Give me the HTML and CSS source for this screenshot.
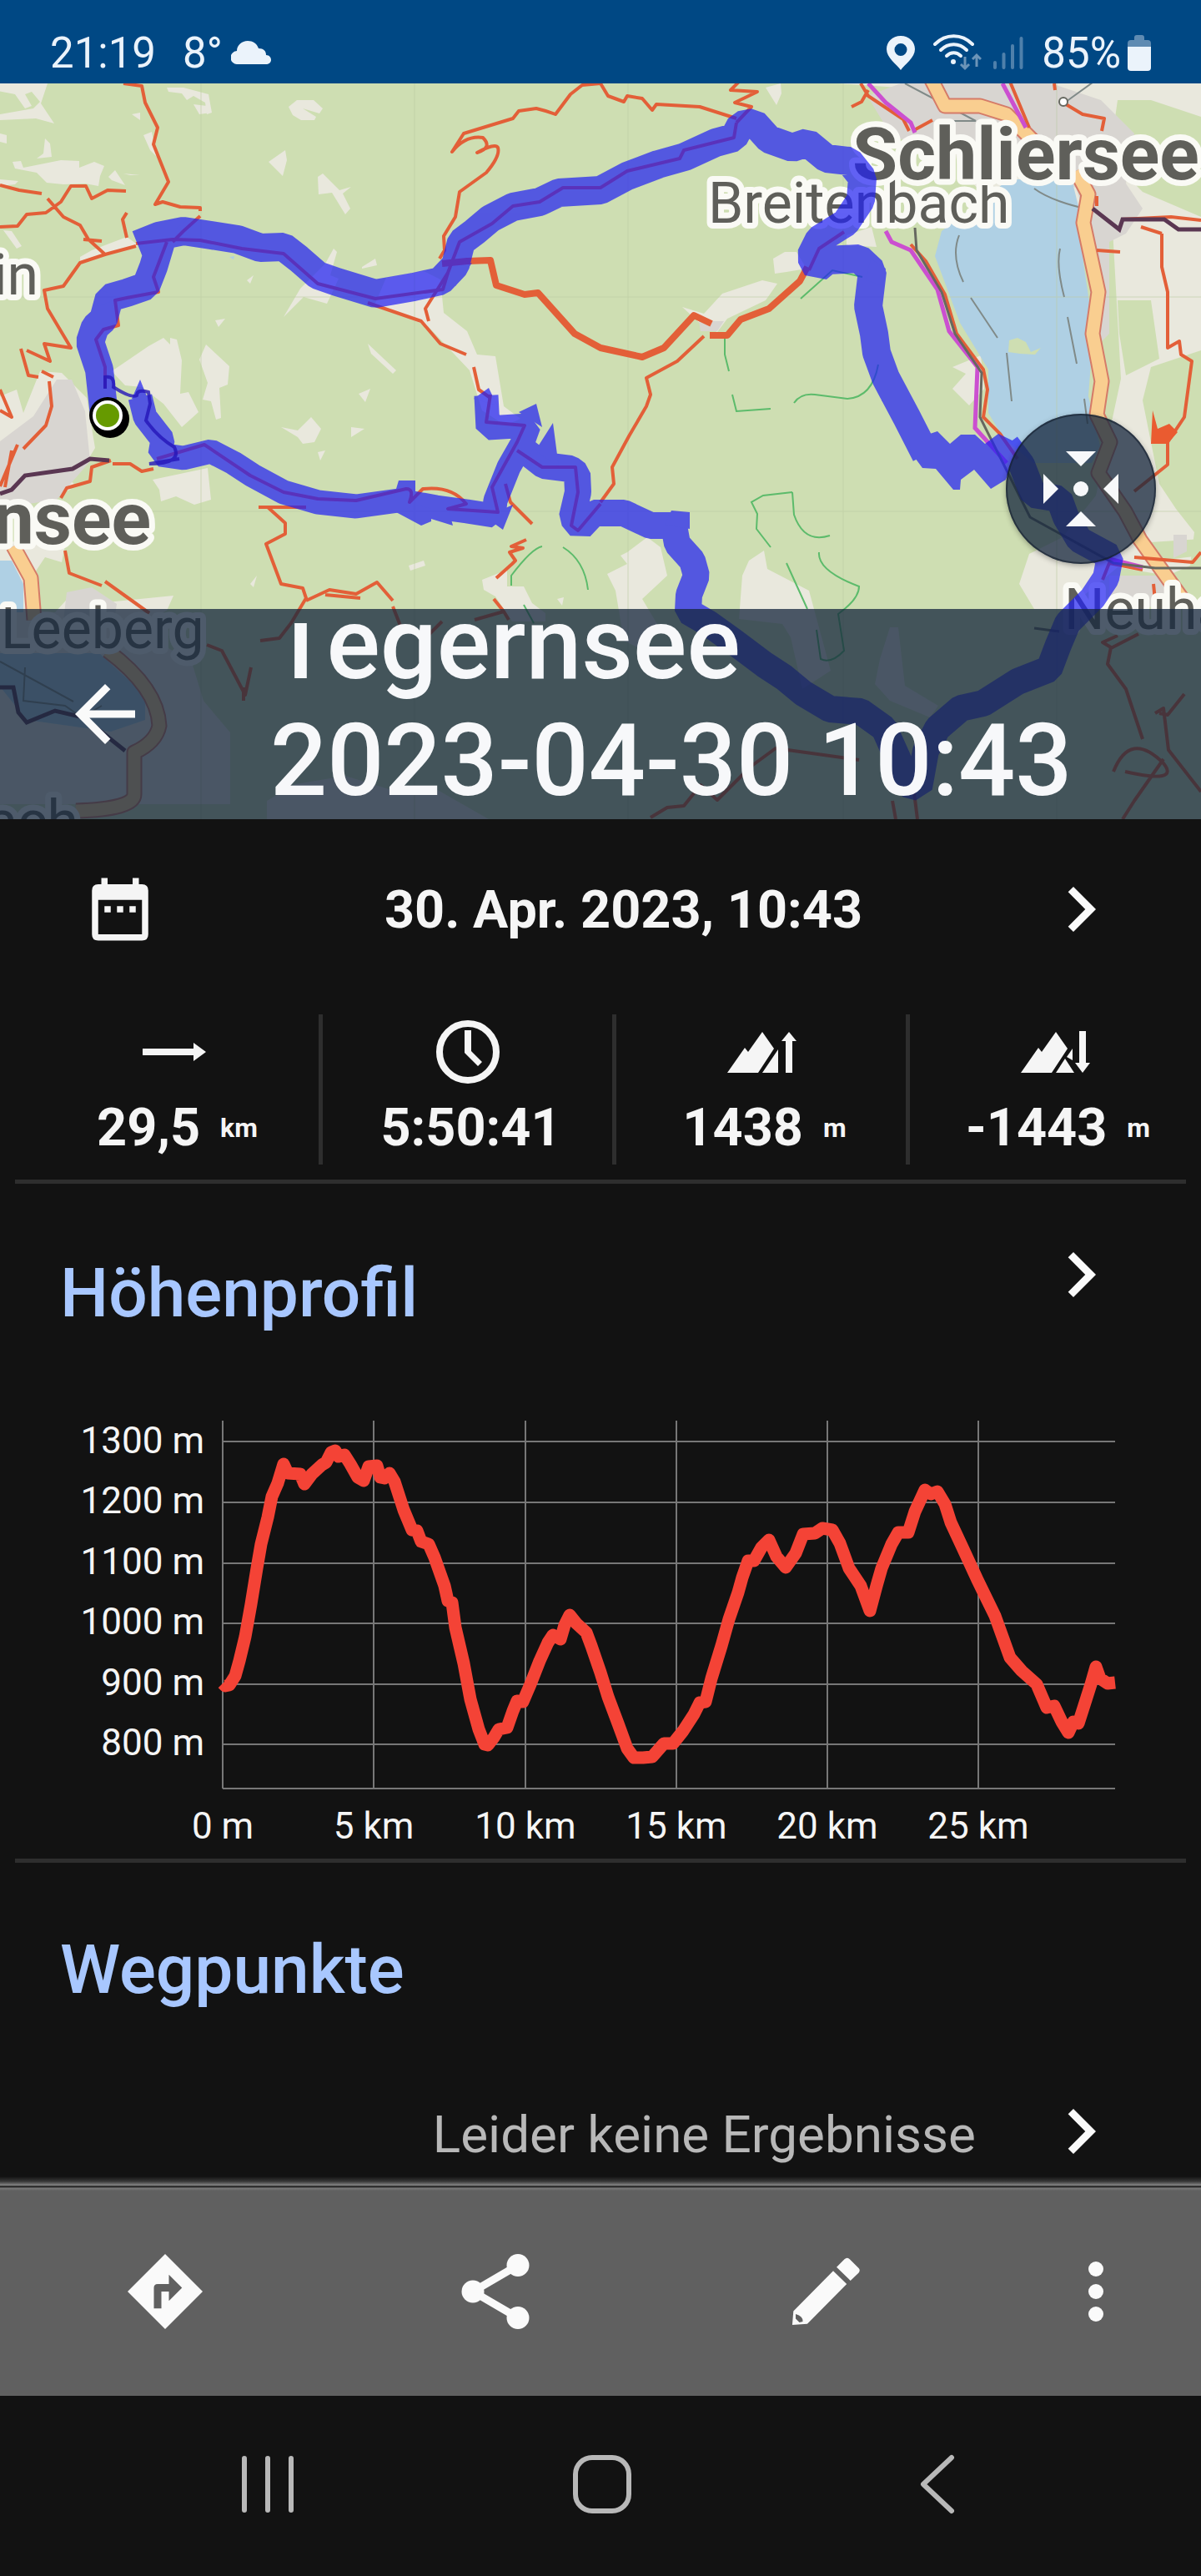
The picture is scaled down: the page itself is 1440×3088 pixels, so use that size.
FILE: index.html
```html
<!DOCTYPE html>
<html lang="de">
<head>
    <meta charset="UTF-8">
    <meta name="viewport" content="width=device-width, initial-scale=1.0">
    <title>Tegernsee 2023-04-30 10:43</title>
    <link rel="stylesheet" href="styles.css">
</head>
<body>

    <div class="status-bar">
        <span class="status-time">21:19</span>
        <span class="status-temp">8°</span>
        <svg class="icon-cloud" width="48" height="28" viewBox="0 0 48 28"><path d="M8 28a8 8 0 0 1-1-16C7 5 13 0 20 0c6 0 11 3 13 9 6 0 9 3 9 8 4 0 6 3 6 6s-3 5-6 5z" fill="#ebf3fb"/></svg>
        <div class="status-right">
            <svg width="34" height="41" viewBox="0 0 34 41"><path fill-rule="evenodd" d="M17 0C7 0 0 7 0 16c0 10 12 18 17 25 5-7 17-15 17-25C34 7 27 0 17 0zm0 9a7 7 0 1 1 0 15 7 7 0 0 1 0-15z" fill="#ebf3fb"/></svg>
            <svg class="icon-wifi" width="58" height="46" viewBox="0 0 58 46">
                <g fill="none" stroke="#ebf3fb" stroke-width="4" stroke-linecap="round"><path d="M2 13C15 0 34 0 47 13"/><path d="M9 20c9-9 22-9 31 0"/><path d="M16 27c5-5 12-5 17 0"/></g>
                <circle cx="24" cy="34" r="3" fill="#ebf3fb"/>
                <path d="M38 28v14m-5-5l5 5 5-5M52 40V26m-5 5l5-5 5 5" fill="none" stroke="#6c94b8" stroke-width="3"/>
            </svg>
            <svg class="icon-signal" width="36" height="40" viewBox="0 0 36 40"><path d="M2 38v-6M12.500 38V22M23 38V12M33.500 38V3" fill="none" stroke="#4f80ab" stroke-width="4" stroke-linecap="round"/></svg>
            <span class="status-battery">85%</span>
            <svg width="28" height="43" viewBox="0 0 28 43"><path d="M8 3q0-3 3-3h6q3 0 3 3v3h4q4 0 4 4v4H0v-4q0-4 4-4h4z" fill="#5f8bb2"/><path d="M0 14h28v25q0 4-4 4H4q-4 0-4-4z" fill="#ebf3fb"/></svg>
        </div>
    </div>

    <header class="map-header">
        <svg class="map" viewBox="0 100 1440 882">
            <rect y="100" width="1440" height="882" fill="#cedeb2"/>

            <!-- meadows -->
            <g fill="#e9e8dd">
                <path d="M0 100h57l-8 24 16 24-22-6-43 2v-7l40-7 8-8-10-12-8 3 8 14-8 3-12-17-20-4z"/>
                <path d="M200 105l20 0 30 8 4 22-6 2-2-14-14-8-8 5-6-8-16-2zM232 125l16 2 5 8-14 2zM158 137l10-2 0 9zM172 162l10-4 6 30-8-8zM54 166l6 6 2 16-18 2 8-6zM0 160l8 2v10l-8-2z"/>
                <path d="M15 194l10-1 3 8 20-4 25-5 22 1 0 8 18-7 12 5-5 12-2 12-16-3-26 1-20-2-12-12-26-5zM130 212l8-8 12 18-16-6zM148 208l20 2-12 0zM0 215l22 2-4 4-18 2z"/>
                <path d="M346 128l10-8 20 0 11 10-4 6-20-6 16 10-2 4-16 0-10-6zM322 194l20-14 2 12-5 19zM381 212l6-4 20 20 14-4-10 8 9 18-6 7-16-26-16 2z"/>
                <path d="M96 308l14-8 42-16 14 10-54 14-16 5zM4 276l10 1 12 18-6 3zM400 298l4 4-8 28 10 4-14 30-28-8-24 24 20-34 30-30zM434 320l16-10 2 8-18 4zM463 333l45-8 20 10 4 40 28 22 12 28 22 2 10 60 20 15-18 8-28-18-15-48-50-53-24-10-40-15z"/>
                <path d="M134 445l44-30 18-10 8 8 0-8 8 2 6 25-2 40 10-2 12 24-20 18-22-28-26-20-20-2zM247 413l28 26-2 22-10 4 2 36-6 2-6-22-10-2 6-20-10-28zM0 475l20-8 8 28 20-50 26 2 30 30 10 60-30 50-60 20-24-40z"/>
                <path d="M337 512l20 4 16-16 12 14-8 16-14 2-6-8zM421 512l16 2-16 10zM381 542l9-2-6 12zM183 575l66-14 4 38-20 6-22-10-18 6-2-14zM430 472l14-6-6 16zM441 412l34 32-4 4-26-24zM258 384l12-2-8 10zM296 336l8-6-4 10z"/>
                <path d="M0 648l78 6-4 20-20-6-20 30 4 34 28 2 22-24 40 12 80-8-8 18-30 14 14 20 46 28 14 46 32 38v86H0zM578 695l30-12 0 20 20 0 10 20 16 12 0 10-40 0-20-30-14-8zM668 718l8-2-2 10zM490 678l18-6 2 6-18 6zM300 700l8-10-4 14z"/>
                <path d="M752 662l8-6 16-12 16 12 8 34-30 28 18 30-20 30-20-10-10-60-10-20 24-12-8-10zM886 742l4-52 8-18 18-12 4 22 50 26 26 96-34 22-14-62-10-16zM1055 790l12-38 10 0 8 70 40 24-10 14-48-20-18-20z"/>
                <path d="M918 105l18-5 1 12-6 14zM1005 100h435v320l-60 20-10 40 20 100 20 30 22 28-5 40-27 12-60-10-60 50h-40l-18-30 12-36 40-20 40-50 30-140-10-180-120-10-65-60-10-60 10-34z"/>
                <path d="M927 310l14-8 14 0 12 20-24 4-14 2zM818 368l26 8 22-24 48-16 18 4-14 20-46 22-12 16-20-10zM1015 282l30-10 6 24-36-2zM1142 440l34-14 4 40-18 20-20-20 16-18z"/>
                <path d="M320 960l34-20 60-10 72 22 30-10 70 40H320z"/>
            </g>
            <g fill="#cedeb2">
                <path d="M1100 100h70l-20 8zM1340 120l40 0 60 20v120l-70-30-40-40zM1340 360l40 0 10 70-40 20-8-50zM60 540l80 20-30 30-40-20zM50 490l30-10 20 20-40 20zM1380 650l60-4v20l-50 6z"/>
            </g>
            <!-- built-up areas -->
            <g fill="#d8d5d1">
                <path d="M1040 115l40-15h180l60 20 40 40-10 60 20 30-20 30-20 10 0 110-15 15-5-130-20-60-160-50-60-10zM68 455l18 0 16 38 6 60-40 46-68 10v-80l40-30zM80 710l30-6 30 20-4 26-60-6zM838 385l30 0-8 12-20 0zM1330 690l70 0 10 30-80 20zM1407 641l16 0 0 20-16 8z"/>
            </g>
            <!-- lakes -->
            <g fill="#afd0e4">
                <path d="M1210 215h75l10 40 4 60 12 80-6 80 14 60-10 20-70 0-36-30-18-30 0-52-34-56-30-80 8-30z"/>
                <path d="M0 672h14l14 28v34H0zM0 783l119 0 55 50v30l-41 14-101-14-32-40zM275 308l6-1-1 4z"/>
            </g>
            <path d="M1210 408l10-3 10 5 6 12 12-5-7 8-18-1-14-2z" fill="#cedeb2"/>

            <g stroke="#bccca2" stroke-width="1" opacity=".6"><path d="M241 100v882M497 100v882M753 100v882M1011 100v882M1267 100v882M0 356h1440M0 613h1440"/></g>
            <g fill="none" stroke="#808a88" stroke-width="2"><path d="M1150 282q-10 25 5 56M1164 357l32 48M1207 423l6 58M1271 298q-5 20 5 58M1280 380l11 56M1300 478l4 30M0 793l88 48M30 800l-2 40 50 6 20 14 24-14M1085 100l85 45-30 0M1240 226q20 15 65 25M1278 122l36-26"/></g>
            <g fill="none" stroke="#5cbb6b" stroke-width="2">
                <path d="M869 405v20l5 20M878 473l5 20 41-3M952 483q8-12 25-10l39 5q30-2 37-41M960 358l38-34 36 8M950 590l-35 4-14 8 7 14-1 18 17 22M950 590l2 27q12 35 43 25M982 662q-2 22 48 41q0 15-25 33l7 44q-15 16-28 10l-5-35M943 675l25 55M650 655q-12 2-37 35v12M675 656q26 16 30 51M628 725l12 22"/>
            </g>

            <!-- main roads -->
            <g fill="none" stroke-linejoin="round">
                <path d="M1115 92l18 35h42l32 10 40 40M1290 205l15 28-6 34 18 83-7 50 11 57-6 40 16 33-14 37 32 46 18 34 50 70" stroke="#d57b68" stroke-width="19"/>
                <path d="M1115 92l18 35h42l32 10 40 40M1290 205l15 28-6 34 18 83-7 50 11 57-6 40 16 33-14 37 32 46 18 34 50 70" stroke="#f9ce90" stroke-width="15"/>
                <path d="M16 655l21 38 4 50M129 780q60 45 62 90-4 20-30 32v50q0 18-70 20" stroke="#d57b68" stroke-width="19"/>
                <path d="M16 655l21 38 4 50M129 780q60 45 62 90-4 20-30 32v50q0 18-70 20" stroke="#f9ce90" stroke-width="15"/>
            </g>

            <!-- tracks and paths -->
            <g fill="none" stroke="#e35f38" stroke-width="4" stroke-linejoin="round">
                <path d="M148 100l22 3 4 20 15 30-5 20 18 45-16 27 9-3 21 6 24 1v4M240 259l-20 18-13 13M720 100l-22 2-14 11-18 24q-10-4-23-7l-21 3-7 9-59 18-14 22q16-20 37-17 12 12-7 18 22-12 25-6 3 10-14 30l-32 23-5 30-14 23 1 17-6 10"/>
                <path d="M0 222l23 6 27 4M0 272l21-1 11-14 23-2 18-13 12-19 18 0 7 15 19-10 22 1M57 238l19 22 20 10 10 17 20 18 37-10M126 305l-30 10-20 28-23 5 4 22 28 47-32-5 7 21-28-13M152 255l-5 8 5 22M25 418l9 32 12 2M50 445l14 7M59 457l3 30-7 23-27 28M0 467l14 33-14-8M100 287l22 2"/>
                <path d="M441 363l64 22 23 27 31 13M537 327l-27 43 4 15M568 440l6 27 14 10M844 403l-32 30-37 20 5 20-5 14-21 36-20 37 2 20-16 22"/>
                <path d="M720 100l9 15 19 7 4-7 18 3 12 14 5-7 52 3 44 14M888 96l-12 12 32 2-27 13 20 5-18 19M1032 100l9 15 42 28 7 14M1041 108l-8 14-12 6M1211 98l23 55M1264 100l1 8M1278 125l20 12 26 5-3 15M1096 156l22-12"/>
                <path d="M1092 293l18 20 23 40 14 47 32 43 5 24-5 33 20 20 21 30M1315 235v12M1315 300l28 2M1393 280v40l7 30v67l14-8 2 16 13 8-9 67-20 30 0 27-40 32M1393 280l-25-8M1344 263l60-3 36 4M1360 668l70 6 10-12M1383 700l2 20M1370 683l-40-8-8 20"/>
                <path d="M184 562l-14 3-14-9h-21M133 552l-23 8-2 17-28 8-7 12M21 533L0 583M14 540l-8 44M78 660l5 27 39 15M126 697l53 38M310 608h57M321 608l21 19v13l-23 12 18 48 26 5 4 12-18 30-14 18-23 3M367 720l28-13 32 5 25-14 19 22M390 713l42 4M471 727l9 23M606 580l6 22 26 26M631 647l-18 8 14 2-16 5 7 10-4 4-19 17M592 718l12 15-35 10M604 733l6 10M248 773l18 7 28 53 7-33M530 745l-20 20M292 840v-16"/>
                <path d="M1340 762l-18 8 10 6-4 20 22 30 20 60M1330 778l35-18M1420 832l-20 25-10-2M1385 855l10-6 6 50 39 50M1335 925q20-50 60-10 20 25-46 10M1395 910l-35 50-14 22M780 980l20-12 20-2 20-25 20 18 40-40 30-22 100 14M1070 960l4 22M1096 950l4 32"/>
                <path d="M163 292l44-5 33 1 50 10 50 6 41 36 69 18 81-11 6-20 14-37 39-22 25-21 32-5 28-17h45l32-20 63-15 5-10 60-15 3-18M200 290l-16 42 6 18-38 7-14 3 4 30-18 5-9 12 11 33v25M188 550l57-17 55 37 40 20 41 8 46 2 60-14q10 0 4 16l16-16q35-4 52 18l-22 6 60 4-7-30 30-54 9-20-46-4 5-33M620 540l30 20 40 0 3 30-8 40 8 6 27-32M1012 278l-30 20-12 26"/>
            </g>
            <g fill="none" stroke="#e35f38" stroke-width="8" stroke-linejoin="round"><path d="M530 316l30-3 28-1 7 30 34 11 16-2 44 49 31 17 50 11 26-11 36-39 21 10M851 402h21l16-19 34-13 37-33 9-17"/></g>
            <path d="M1382 492l6 22 14-6 10 10-12 14-20 0z" fill="#ea5b30"/>
            <g fill="none" stroke="#cb4fd0" stroke-width="5"><path d="M1041 100l21 23 30 24 5 12M1202 100l28 53M1062 277l7 13 23 10 32 47 14 50 34 43-3 73 38 42M1330 670l40 10"/></g>
            <g fill="none" stroke="#666860" stroke-width="3"><path d="M1097 273l2 27 30 50 16 50 32 47-2 53 60 120 100 55 50 6 55 0M1240 753l30 4"/></g>
            <g fill="none" stroke="#5a3752" stroke-width="5"><path d="M0 592l14-5 16-17 57-8 21-12 23 2M1310 250l32 25 4-12 50 0 17 12h27M0 824h16l6 30 10 12 34-14 34 8 50 40"/></g>
            <circle cx="1275" cy="122" r="5" fill="#fff" stroke="#666860" stroke-width="2"/>

            <!-- place names -->
            <g class="place">
                <text x="849" y="267">Breitenbach</text>
                <text x="46" y="353" text-anchor="end">in</text>
                <text x="1" y="777">Leeberg</text>
                <text x="1276" y="754">Neuhaus</text>
                <text x="94" y="1008" text-anchor="end">ach</text>
            </g>
            <g class="place place-town">
                <text x="1022" y="215">Schliersee</text>
                <text x="181" y="652" text-anchor="end">nsee</text>
            </g>

            <!-- recorded track -->
            <g opacity=".7" fill="#201ff4" stroke="#201ff4" stroke-linejoin="bevel">
                <path fill="none" stroke-width="34" d="M125 498L119 443 108 410 114 392 124 383 131 357 152 351 175 343 184 320 193 290M165 293L190 283 220 277 253 282 285 287 312 297 340 296 358 310 381 330 404 338 450 352 496 344 528 337 546 318 553 290 569 278 588 262 615 248 647 242 670 231 720 228 752 211 789 197 821 188 858 171 880 165 888 150 904 147 922 167 950 177 968 171 991 190 1018 193 1034 213 1032 240 1014 267 982 287 972 307 980 322 992 312 1030 310 1046 325 1041 367 1048 400 1051 423 1062 453 1087 500 1110 545"/>
                <path stroke="none" d="M1057 480H1087L1115 520 1124 517 1139 532 1152 521 1169 521 1181 532 1197 520 1222 532 1206 575 1188 586 1168 563 1152 575 1151 587 1143 587 1122 562 1106 561 1092 542 1089 515z"/>
                <path fill="none" stroke-width="32" d="M1207 533L1225 557 1239 593 1270 598 1278 620 1294 647 1331 667 1326 693 1310 717 1280 747 1269 773 1258 802 1220 817 1179 843 1152 849 1124 873 1110 900 1102 944 1087 940 1078 913 1060 873 1032 853 995 850 963 831 940 812 917 797 881 770 849 747 825 733 826 713 835 690 830 672 812 652 808 630 780 630 748 615 712 615 696 632 686 620 693 590 692 568 684 562 652 558 629 540"/>
                <path fill="none" stroke-width="29" d="M583 474L585 513 634 510 626 532 610 560 594 600 592 618 560 613 523 608 478 600 427 607 381 602 340 590 303 570 280 555 253 541 220 549 192 545 195 527 174 500 168 476"/>
                <path stroke="none" d="M158 478L168 455 178 480zM568 478L586 465 596 486zM622 494L643 484 650 512zM642 540L663 507 670 560zM478 576h20v20h-26zM210 275l14-11 20 10zM116 368l4-21 24 10zM500 605l17 5v15l-12 5-30-16zM582 620l21 15 12-30zM517 608h20l6 22-26-8zM805 612l22 2v20l-30-5zM1044 310l18 12-4 20-20-6zM528 325l38-10-20 28z"/>
            </g>
            <g fill="none" stroke="#2415b8" stroke-width="4" opacity=".8"><path d="M126 466V452q12-2 10 12 22 14 28 10 0-8 14-4l2 14-5 20q14 20 34 32 10 20-30 20l36-6"/></g>

            <!-- start marker -->
            <circle cx="132" cy="502" r="23" fill="#000"/>
            <circle cx="129" cy="498" r="22" fill="#000"/>
            <circle cx="129" cy="498" r="18" fill="#fff"/>
            <circle cx="129" cy="498" r="14" fill="#669a00"/>
        </svg>

        <button class="center-button" aria-label="Zentrieren">
            <svg width="180" height="180" viewBox="0 0 180 180" fill="#f7f8fa"><path d="M72 45h36L90 63zM72 135h36l-18-18zM45 72v36l18-18zM135 72v36l-18-18z"/><circle cx="90" cy="90" r="9"/></svg>
        </button>

        <div class="title-bar">
            <button class="back-button" aria-label="Zurück">
                <svg class="icon" viewBox="0 0 24 24"><path d="M20 11H7.830l5.590-5.590L12 4l-8 8 8 8 1.410-1.410L7.830 13H20v-2z"/></svg>
            </button>
            <h1>Tegernsee<br>2023-04-30 10:43</h1>
        </div>
    </header>

    <main>
        <a class="date-row" href="#">
            <svg class="icon-calendar" viewBox="0 0 24 24"><path fill-rule="evenodd" d="M6 2h2v2h8V2h2v2h1q2 0 2 2v14q0 2-2 2H5q-2 0-2-2V6q0-2 2-2h1zM5 9v11h14V9zM7 11h2v2H7zM11 11h2v2h-2zM15 11h2v2h-2z"/></svg>
            <span class="date-text">30. Apr. 2023, 10:43</span>
            <svg class="icon" viewBox="0 0 24 24"><path d="M10 6L8.590 7.410 13.170 12l-4.580 4.590L10 18l6-6z"/></svg>
        </a>

        <div class="stats">
            <div class="stat">
                <svg width="90" height="90" viewBox="0 0 90 90"><path d="M7 41h61V34l15 11-15 11v-7H7z"/></svg>
                <p>29,5 <small>km</small></p>
            </div>
            <div class="stat">
                <svg width="90" height="90" viewBox="0 0 90 90"><circle cx="45" cy="45" r="34" fill="none" stroke="#f5f5f5" stroke-width="8"/><path d="M41 19h8v25l13 13-5 5-16-16z"/></svg>
                <p>5:50:41</p>
            </div>
            <div class="stat">
                <svg width="90" height="90" viewBox="0 0 90 90"><path d="M4 70l21-30 4 5 17-24 14 20-19 29zM46 70l19-28v28zM78 21l9 11h-5v38h-8V32h-5z"/></svg>
                <p>1438 <small>m</small></p>
            </div>
            <div class="stat">
                <svg width="90" height="90" viewBox="0 0 90 90"><path d="M4 70l21-30 4 5 17-24 14 20-19 29zM46 70l11-17 11 17zM59 51l7-10v14zM74 20h8v38h5l-9 12-9-12h5z"/></svg>
                <p>-1443 <small>m</small></p>
            </div>
        </div>

        <section class="profile">
            <div class="section-head">
                <h2>Höhenprofil</h2>
                <a href="#" aria-label="Höhenprofil öffnen"><svg class="icon" viewBox="0 0 24 24"><path d="M10 6L8.590 7.410 13.170 12l-4.580 4.590L10 18l6-6z"/></svg></a>
            </div>
            <svg class="chart" viewBox="0 1598 1440 630">
                <g class="chart-grid">
                    <path d="M267 1728h1070M267 1801h1070M267 1874h1070M267 1946h1070M267 2019h1070M267 2091h1070M267 2144h1070"/>
                    <path d="M267 1703v441M448 1703v441M630 1703v441M811 1703v441M992 1703v441M1173 1703v441"/>
                </g>
                <polyline class="chart-line" points="267,2018 270,2021 275,2020 282,2009 287,1991 294,1962 301,1923 308,1880 313,1851 321,1819 326,1794 333,1778 340,1755 345,1766 360,1767 365,1779 374,1767 386,1756 391,1753 397,1741 402,1739 406,1746 413,1744 420,1755 429,1771 436,1775 442,1758 452,1757 456,1771 461,1772 467,1766 473,1776 484,1810 494,1834 500,1835 505,1848 514,1851 521,1867 533,1901 537,1919 542,1921 546,1951 556,1994 564,2037 574,2073 581,2091 585,2092 592,2083 598,2073 608,2071 615,2051 620,2039 627,2040 636,2019 647,1991 657,1969 663,1960 672,1965 677,1948 683,1936 691,1946 703,1957 709,1973 720,2005 729,2034 741,2066 752,2096 760,2107 771,2107 782,2106 796,2090 807,2090 819,2075 832,2055 839,2041 846,2040 853,2012 865,1973 874,1941 885,1909 890,1891 897,1871 904,1871 913,1855 922,1846 931,1866 942,1879 954,1862 963,1839 977,1838 986,1832 998,1834 1007,1850 1018,1880 1032,1901 1043,1931 1051,1901 1057,1880 1069,1851 1077,1837 1089,1837 1097,1812 1109,1786 1116,1791 1124,1788 1133,1803 1140,1825 1154,1855 1172,1894 1193,1937 1211,1987 1225,2003 1243,2019 1255,2047 1264,2045 1273,2064 1281,2077 1287,2064 1293,2066 1301,2041 1308,2019 1314,1998 1319,2012 1328,2018 1337,2017"/>
                <g class="chart-label" text-anchor="end">
                    <text x="245" y="1742">1300 m</text>
                    <text x="245" y="1814">1200 m</text>
                    <text x="245" y="1887">1100 m</text>
                    <text x="245" y="1959">1000 m</text>
                    <text x="245" y="2032">900 m</text>
                    <text x="245" y="2104">800 m</text>
                </g>
                <g class="chart-label" text-anchor="middle">
                    <text x="267" y="2204">0 m</text>
                    <text x="448" y="2204">5 km</text>
                    <text x="630" y="2204">10 km</text>
                    <text x="811" y="2204">15 km</text>
                    <text x="992" y="2204">20 km</text>
                    <text x="1173" y="2204">25 km</text>
                </g>
            </svg>
        </section>

        <section class="waypoints">
            <h2>Wegpunkte</h2>
            <a class="empty-row" href="#">
                <span>Leider keine Ergebnisse</span>
                <svg class="icon" viewBox="0 0 24 24"><path d="M10 6L8.590 7.410 13.170 12l-4.580 4.590L10 18l6-6z"/></svg>
            </a>
        </section>
    </main>

    <div class="toolbar">
        <button aria-label="Navigation">
            <svg class="icon" viewBox="0 0 24 24"><path fill-rule="evenodd" d="M12 2l10 10-10 10L2 12zM13 7.500V10H10q-1 0-1 1v5.500h2V12h2v2.500l3.500-3.500z"/></svg>
        </button>
        <button aria-label="Teilen">
            <svg class="icon" viewBox="0 0 24 24"><path d="M18 5L6 12l12 7" fill="none" stroke="#fafafa" stroke-width="2"/><circle cx="18" cy="5" r="3"/><circle cx="6" cy="12" r="3"/><circle cx="18" cy="19" r="3"/></svg>
        </button>
        <button aria-label="Bearbeiten">
            <svg class="icon" viewBox="0 0 24 24"><path fill-rule="evenodd" d="M3.100 20.900L3.400 17.200 14 6.500l3.600 3.500L7.100 20.600zM4 18q2 .500 1.900 2L5 20.200 4 19.200z"/><path d="M14.900 5.500L17 3.400q.700-.700 1.400 0l2.400 2.400q.500.500 0 1.200l-2.200 2.100z"/></svg>
        </button>
        <button aria-label="Mehr">
            <svg class="icon" viewBox="0 0 24 24"><circle cx="12" cy="6" r="2"/><circle cx="12" cy="12" r="2"/><circle cx="12" cy="18" r="2"/></svg>
        </button>
    </div>

    <nav class="nav-bar">
        <button aria-label="Letzte Apps"><svg width="72" height="72" viewBox="0 0 72 72"><path d="M8 5v62M36 5v62M64 5v62"/></svg></button>
        <button aria-label="Startseite"><svg width="72" height="72" viewBox="0 0 72 72"><rect x="4" y="4" width="64" height="64" rx="20"/></svg></button>
        <button aria-label="Zurück"><svg width="72" height="72" viewBox="0 0 72 72"><path d="M54 4L20 36l34 32"/></svg></button>
    </nav>

</body>
</html>
```
FILE: styles.css
```css
* {
    box-sizing: border-box;
}

body {
    font-family: Roboto, "Liberation Sans", sans-serif;
    margin: 0;
    background: #121212;
    color: #f5f5f5;
}

svg {
    display: block;
    flex: none;
}

h1, h2, p {
    margin: 0;
}

a {
    color: inherit;
    text-decoration: none;
}

button {
    display: flex;
    align-items: center;
    justify-content: center;
    padding: 0;
    border: none;
    background: none;
    cursor: pointer;
}

.icon {
    width: 108px;
    height: 108px;
    fill: #fafafa;
}

/* status bar */
.status-bar {
    display: flex;
    align-items: center;
    height: 100px;
    padding: 26px 60px 0;
    background: #004884;
    color: #ebf3fb;
    font-size: 51px;
}

.status-temp {
    margin-left: 32px;
}

.icon-cloud {
    margin-left: 10px;
}

.status-right {
    display: flex;
    align-items: center;
    margin-left: auto;
}

.icon-wifi {
    margin-left: 22px;
}

.icon-signal {
    margin: 0 22px 0 14px;
}

.status-battery {
    margin-right: 8px;
}

/* map */
.map-header {
    position: relative;
    overflow: hidden;
}

.map {
    width: 100%;
    height: auto;
}

.place text {
    font-size: 68px;
    fill: #5f5f5a;
    stroke: #fafaf5;
    stroke-width: 14px;
    stroke-linejoin: round;
    paint-order: stroke;
}

.place-town text {
    font-size: 88px;
    font-weight: bold;
}

.center-button {
    position: absolute;
    top: 396px;
    right: 54px;
    border-radius: 50%;
    background: rgba(20, 38, 60, 0.75);
    box-shadow: inset 0 0 0 2px rgba(20, 30, 45, 0.6), 0 2px 6px rgba(0, 0, 0, 0.3);
}

.title-bar {
    position: absolute;
    left: 0;
    right: 0;
    bottom: 0;
    display: flex;
    align-items: center;
    height: 252px;
    padding-left: 72px;
    background: rgba(20, 38, 60, 0.75);
}

.title-bar h1 {
    display: flex;
    flex-direction: column;
    justify-content: flex-end;
    align-self: flex-end;
    height: 235px;
    margin-left: 144px;
    overflow: hidden;
    font-size: 120px;
    line-height: 140px;
    font-weight: 500;
    white-space: nowrap;
    color: #f7f8fa;
}

/* date */
.date-row {
    display: flex;
    align-items: center;
    height: 216px;
    padding: 0 90px 0 99px;
}

.icon-calendar {
    width: 90px;
    height: 90px;
    fill: #f5f5f5;
}

.date-text {
    flex: 1;
    padding-left: 64px;
    font-size: 63px;
    font-weight: bold;
    text-align: center;
}

/* stats */
.stats {
    display: grid;
    grid-template-columns: repeat(4, 1fr);
    padding: 18px 2px 18px 30px;
}

.stat {
    display: flex;
    flex-direction: column;
    align-items: center;
    height: 180px;
    border-left: 5px solid #2e2e2e;
}

.stat:first-child {
    border-left-color: transparent;
}

.stat svg {
    fill: #f5f5f5;
}

.stat p {
    display: flex;
    align-items: center;
    gap: 24px;
    padding-left: 8px;
    font-size: 63px;
    line-height: 92px;
    font-weight: bold;
}

.stat small {
    font-size: 32px;
}

/* sections */
section::before {
    content: "";
    display: block;
    height: 5px;
    margin: 0 18px;
    background: #2e2e2e;
}

h2 {
    font-size: 82px;
    line-height: 96px;
    font-weight: 500;
    color: #a8c7ff;
}

.section-head {
    display: flex;
    justify-content: space-between;
    align-items: flex-start;
    padding: 55px 90px 0 72px;
}

.section-head h2 {
    margin: 28px 0 0;
}

.chart {
    width: 100%;
    height: auto;
}

.chart-grid {
    stroke: #777;
    stroke-width: 2px;
}

.chart-line {
    fill: none;
    stroke: #f44336;
    stroke-width: 15px;
    stroke-linejoin: round;
}

.chart-label {
    font-size: 44px;
    fill: #f5f5f5;
}

.waypoints h2 {
    padding: 80px 72px 0;
}

.empty-row {
    display: flex;
    align-items: center;
    justify-content: flex-end;
    gap: 72px;
    margin-top: 92px;
    padding-right: 90px;
}

.empty-row span {
    padding-top: 6px;
    font-size: 62px;
    color: #b8b8b8;
}

/* toolbar */
.toolbar {
    display: grid;
    grid-template-columns: 11fr 11fr 11fr 7fr;
    height: 263px;
    padding-top: 12px;
    background: linear-gradient(#121212, #383838 6px, #8c8c8c 11px, #303030 11px, #303030 13px, #7c7c7c 14px, #606060 17px);
}

/* system navigation */
.nav-bar {
    display: grid;
    grid-template-columns: repeat(3, 1fr);
    height: 216px;
    padding: 0 116px 4px 120px;
    background: #121212;
}

.nav-bar svg {
    fill: none;
    stroke: #b8b8b8;
    stroke-width: 6px;
    stroke-linecap: round;
    stroke-linejoin: round;
}
```
